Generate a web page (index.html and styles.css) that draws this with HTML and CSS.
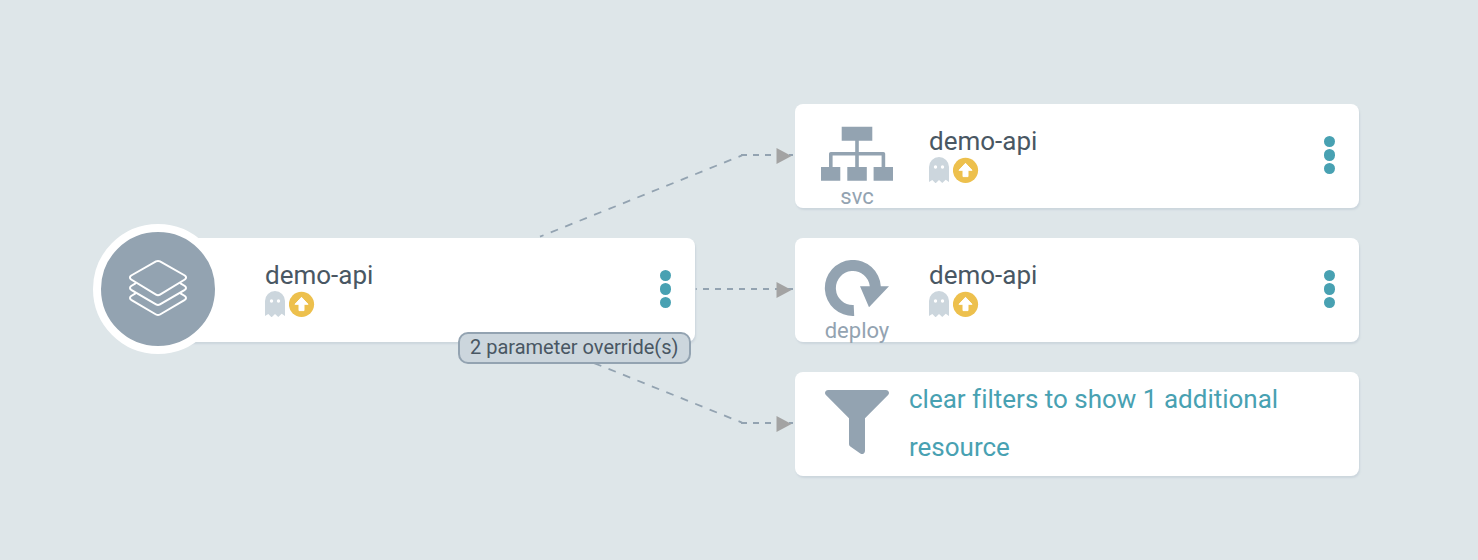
FILE: index.html
```
<!DOCTYPE html>
<html lang="en">
<head>
<meta charset="utf-8">
<title>Resource tree</title>
<link rel="stylesheet" href="styles.css">
</head>
<body>
<svg width="0" height="0" class="defs">
  <symbol id="ghost" viewBox="0 0 20 26"><path fill="#ccd6dd" d="M0 10a10 10 0 0 1 20 0v15l-3.300-2.300-3.400 3.300-3.300-3-3.400 3.300-3.300-3.300-3.300 2z"/><circle cx="6.500" cy="10" r="1.700" fill="#fff"/><circle cx="13.500" cy="10" r="1.700" fill="#fff"/></symbol>
  <symbol id="sync" viewBox="0 0 26 26"><circle cx="12.500" cy="13.300" r="12.600" fill="#edc04d"/><path fill="#fff" stroke="#fff" stroke-linejoin="round" d="M12.500 6.300l6.500 7h-4v6.300H10v-6.300H6z"/></symbol>
</svg>
<main class="tree">
  <svg class="edges" width="1478" height="560" viewBox="0 0 1478 560">
    <g class="edge">
      <path class="slope upper" d="M540 236.700L742 155.400"/>
      <path d="M741 155H793"/>
      <path d="M691 289H793"/>
      <path class="slope" d="M536.300 339.800L742 422.600"/>
      <path d="M741 423H793"/>
    </g>
    <g class="arrow"><path d="M776.500 148v16l15-8z"/><path d="M776.500 282v16l15-8z"/><path d="M776.500 416v16l15-8z"/></g>
  </svg>

  <article class="node app">
    <div class="badge">
      <svg width="60" height="60" viewBox="0 0 60 60"><g class="layers">
        <path d="M3.200 16.500L28 2.400q2-1 4 0L56.800 16.500q2.600 2 0 4L32 35.600q-2 1.300-4 0L3.200 20.500q-2.600-2 0-4z"/>
        <path d="M7.500 24.300L3.200 27q-2.400 1.900 0 3.800L28 45.400q2 1.200 4 0L56.800 30.800q2.400-1.900 0-3.800L52.500 24.300"/>
        <path d="M7.500 34.300L3.200 37q-2.400 1.900 0 3.800L28 55.500q2 1.200 4 0L56.800 40.800q2.400-1.900 0-3.800L52.500 34.300"/>
      </g></svg>
    </div>
    <div class="info"><div class="name">demo-api</div><div class="status"><svg class="ghost"><use href="#ghost"/></svg><svg class="sync"><use href="#sync"/></svg></div></div>
    <div class="menu"><i></i><i></i><i></i></div>
    <div class="override">2 parameter override(s)</div>
  </article>

  <article class="node svc">
    <div class="kind">
      <svg width="72" height="56" viewBox="0 0 72 56"><path fill="#93a3b1" d="M20.700 .8h30.600v13.900H20.700zM0 41h19.300v13.700H0zM26.300 41h19.500v13.700H26.300zM52.600 41H72v13.700H52.600z"/><path fill="none" stroke="#93a3b1" stroke-width="3.600" stroke-linejoin="round" d="M36 13v28M9.800 42V27.800h52.600V42"/></svg>
      <span>svc</span>
    </div>
    <div class="info"><div class="name">demo-api</div><div class="status"><svg class="ghost"><use href="#ghost"/></svg><svg class="sync"><use href="#sync"/></svg></div></div>
    <div class="menu"><i></i><i></i><i></i></div>
  </article>

  <article class="node deploy">
    <div class="kind">
      <svg width="72" height="56" viewBox="0 0 72 56"><path fill="#93a3b1" d="M33.200 55.900A28 28 0 1 1 59.800 26.300H68L48 47.300 39 26.300h9.800A17 17 0 1 0 32.700 45z"/></svg>
      <span>deploy</span>
    </div>
    <div class="info"><div class="name">demo-api</div><div class="status"><svg class="ghost"><use href="#ghost"/></svg><svg class="sync"><use href="#sync"/></svg></div></div>
    <div class="menu"><i></i><i></i><i></i></div>
  </article>

  <article class="node filter">
    <svg width="64" height="64" viewBox="0 0 64 64"><path fill="#93a3b1" d="M3 0h58a3 3 0 0 1 2.100 5.100L40 28.200V61a3 3 0 0 1-4.700 2.500l-10-7A3 3 0 0 1 24 54V28.200L.9 5.100A3 3 0 0 1 3 0z"/></svg>
    <a>clear filters to show 1 additional resource</a>
  </article>
</main>
</body>
</html>
```
FILE: styles.css
```
body { margin: 0; font-family: Roboto, sans-serif; color: #495763; font-variant-ligatures: none; }
svg { flex: none; }
.defs { position: absolute; }
.tree { position: relative; width: 1478px; height: 560px; overflow: hidden; background: #dee6e9; }
.edges { position: absolute; inset: 0; }
.edge { fill: none; stroke: #93a3b1; stroke-width: 2; stroke-dasharray: 6 6; }
.edge .slope { stroke-dasharray: 7.800px 7.770px; stroke-width: 1.800; }
.edge .upper { stroke-dashoffset: 4px; }
.arrow { fill: #a3a3a3; }
.node { position: absolute; display: flex; box-sizing: border-box; width: 564px; height: 104px; background: #fff; border-radius: 8px; box-shadow: 1px 2px 2px #ccd6dd; }
.app { left: 131px; top: 238px; }
.svc { left: 795px; top: 104px; }
.deploy { left: 795px; top: 238px; }
.filter { left: 795px; top: 372px; padding: 18px 30px; gap: 20px; }
.badge { position: absolute; left: -38px; top: -14px; box-sizing: border-box; width: 130px; height: 130px; display: flex; align-items: center; justify-content: center; border: 8px solid #fff; border-radius: 50%; background: #93a3b1; }
.layers { fill: none; stroke: #fff; stroke-width: 2; stroke-linecap: round; }
.kind { width: 124px; box-sizing: border-box; padding-top: 22px; display: flex; flex-direction: column; align-items: center; font-size: 22px; line-height: 26px; color: #93a3b1; }
.kind span { margin-top: 2px; }
.info { margin-left: 10px; padding-top: 21px; }
.app .info { margin-left: 134px; }
.name { font-size: 26px; line-height: 32px; }
.status { display: flex; gap: 4px; }
.ghost { width: 20px; height: 26px; }
.sync { width: 26px; height: 26px; }
.menu { display: flex; flex-direction: column; gap: 2.400px; margin: 31.500px 24px 0 auto; }
.menu i { width: 11.400px; height: 11.400px; border-radius: 50%; background: #48a1b2; }
.override { position: absolute; right: 4px; top: 94px; box-sizing: border-box; width: 233px; height: 32px; padding: 0 10px; border: 2px solid #93a3b1; border-radius: 10px; background: #ccd6dd; font-size: 20px; line-height: 27px; white-space: nowrap; }
.filter a { margin-top: -15px; width: 400px; font-size: 26px; line-height: 48px; color: #48a1b2; }
```
